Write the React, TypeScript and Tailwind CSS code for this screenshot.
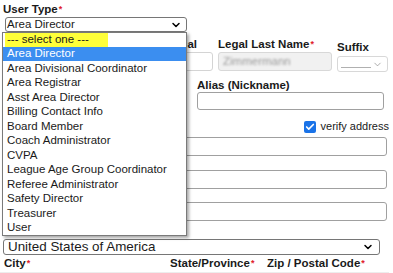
import { ChevronDown, Check } from "lucide-react";

const roles = [
  "Area Director",
  "Area Divisional Coordinator",
  "Area Registrar",
  "Asst Area Director",
  "Billing Contact Info",
  "Board Member",
  "Coach Administrator",
  "CVPA",
  "League Age Group Coordinator",
  "Referee Administrator",
  "Safety Director",
  "Treasurer",
  "User",
];

function Req() {
  return <span className="text-[#e0202a] text-[9px] align-top ml-[1px]">*</span>;
}

function Label({ children, required }: { children: React.ReactNode; required?: boolean }) {
  return (
    <div className="text-[11.5px] font-bold leading-[13px] text-[#1a1a1a] whitespace-nowrap">
      {children}
      {required && <Req />}
    </div>
  );
}

function TextBox({ className = "" }: { className?: string }) {
  return <div className={"h-[19px] rounded-[3px] border border-[#a0a0a0] bg-white " + className} />;
}

export default function App() {
  return (
    <div className="relative w-[393px] h-[273px] overflow-hidden bg-white font-['Liberation_Sans',Arial,sans-serif] text-[#1a1a1a]">
      {/* form underneath the open list */}
      <div className="flex flex-col pt-[3px]">
        <div className="pl-[3px]">
          <Label required>User Type</Label>
        </div>
        <div className="ml-[5px] mt-[1px] w-[182px] h-[15px] rounded-[3px] border border-[#767676] flex items-center justify-between pl-[1px] pr-[4px]">
          <span className="text-[11.5px] leading-none">Area Director</span>
          <ChevronDown size={12} strokeWidth={3} className="text-black" />
        </div>

        {/* names row */}
        <div className="flex gap-[5px] pl-[5px] mt-[6px]">
          <div className="w-[110px] flex flex-col gap-[1px]">
            <div className="h-[13px]" />
            <TextBox className="bg-[#f1f1f1]" />
          </div>
          <div className="w-[93px] flex flex-col gap-[1px]">
            <div className="pr-[16px] flex justify-end">
              <Label>Initial</Label>
            </div>
            <TextBox className="bg-[#f1f1f1] border-[#d4d4d4]" />
          </div>
          <div className="w-[114px] flex flex-col gap-[1px]">
            <Label required>Legal Last Name</Label>
            <div className="h-[19px] rounded-[3px] border border-[#d8d8d8] bg-[#f1f1f1] flex items-center px-[4px]">
              <span className="text-[11.5px] text-[#9a9a9a] blur-[1.2px]">Zimmermann</span>
            </div>
          </div>
          <div className="w-[51px] flex flex-col gap-[2px] pt-[3px]">
            <Label>Suffix</Label>
            <div className="h-[16px] rounded-[3px] border border-[#d8d8d8] bg-white flex items-center justify-between pl-[3px] pr-[4px]">
              <span className="w-[30px] h-[1px] bg-[#b0b0b0] mt-[6px]" />
              <ChevronDown size={11} strokeWidth={1.5} className="text-[#888]" />
            </div>
          </div>
        </div>

        {/* alias row */}
        <div className="flex justify-end pr-[9px] mt-[7px]">
          <div className="w-[187px] flex flex-col">
            <Label>Alias (Nickname)</Label>
            <div className="h-[18px] rounded-[3px] border border-[#a0a0a0] bg-white" />
          </div>
        </div>

        {/* verify address */}
        <div className="flex justify-end items-center gap-[5px] pr-[4px] mt-[10px] h-[13px]">
          <span className="w-[12px] h-[12px] rounded-[2px] bg-[#1a73e8] flex items-center justify-center">
            <Check size={10} strokeWidth={4} className="text-white" />
          </span>
          <span className="text-[11px] leading-none">verify address</span>
        </div>

        <div className="flex flex-col pl-[5px] pr-[6px] mt-[4px]">
          <TextBox />
          <div className="h-[14px]" />
          <TextBox />
          <div className="h-[13px]" />
          <TextBox />
          <div className="h-[18px]" />
        </div>

        <div className="ml-[3px] w-[377px] h-[16px] rounded-[3px] border border-[#767676] flex items-center justify-between pl-[4px] pr-[5px]">
          <span className="text-[13.4px] leading-none">United States of America</span>
          <ChevronDown size={12} strokeWidth={3} className="text-black" />
        </div>

        <div className="flex items-center h-[17px] pl-[4px]">
          <div className="w-[166px]"><Label required>City</Label></div>
          <div className="w-[97px]"><Label required>State/Province</Label></div>
          <div><Label required>Zip / Postal Code</Label></div>
        </div>
        <div className="h-[6px] bg-[#ededed] mr-[4px]" />
      </div>

      {/* open dropdown list */}
      <div className="absolute left-[2px] top-[32px] w-[185px] h-[204px] border border-[#7a7a7a] bg-white shadow-[2px_2px_3px_rgba(0,0,0,0.35)] flex flex-col">
        <div className="h-[14px] flex items-center">
          <span className="ml-[2px] bg-[#ffff3a] h-[14px] w-[103px] flex items-center pl-[2px] text-[11.5px] leading-none">
            --- select one ---
          </span>
        </div>
        {roles.map((r, i) => (
          <div
            key={r}
            className={
              "h-[14.5px] flex items-center pl-[4px] text-[11.5px] leading-none " +
              (i === 0 ? "bg-[#3b8ef0] text-white" : "text-[#1a1a1a]")
            }
          >
            {r}
          </div>
        ))}
      </div>
    </div>
  );
}
